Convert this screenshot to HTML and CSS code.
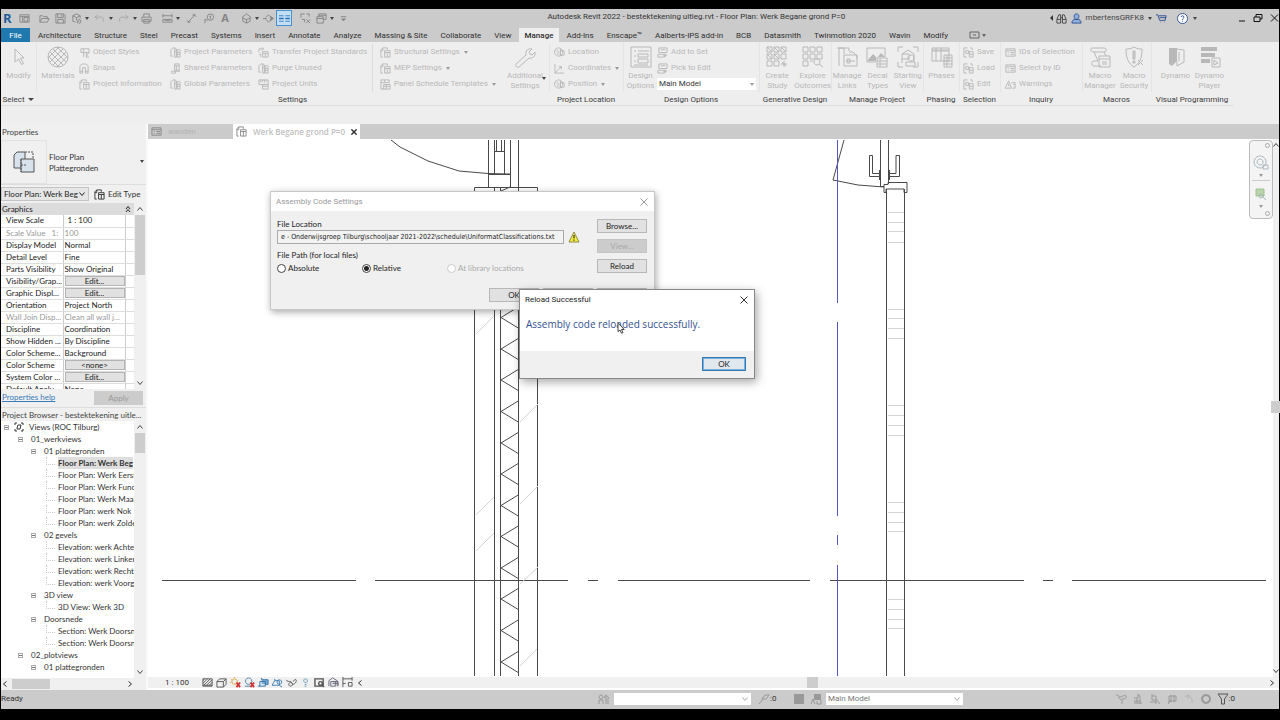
FILE: index.html
```html
<!DOCTYPE html>
<html lang="en">
<head>
<meta charset="utf-8">
<title>Autodesk Revit 2022</title>
<link rel="stylesheet" href="styles.css">
</head>
<body>
<svg class="sprite" aria-hidden="true">
  <symbol id="i-home" viewBox="0 0 12 12"><path d="M1 2h10v8H1zM1 4h10M4 4v6M5.500 5h4v4h-4z"/></symbol>
  <symbol id="i-open" viewBox="0 0 12 12"><path d="M1 10V3h3l1 1h4v2M1 10l2-4h8L9 10z"/></symbol>
  <symbol id="i-save" viewBox="0 0 12 12"><path d="M1 1h8.500l1.500 1.500V11H1zM3 1v4h6V1M3 11V7h6v4M7 2v2"/></symbol>
  <symbol id="i-sync" viewBox="0 0 12 12"><path d="M2 9V3l4-2 4 2v3M2 3l4 2 4-2M6 5v3M2 9l3 1M7 8.500a2 2 0 1 1 1 2.500M7 11V9h2"/></symbol>
  <symbol id="i-undo" viewBox="0 0 12 12"><path d="M4 2L1 4.500 4 7M1 4.500h6c3 0 4 2 3 5"/></symbol>
  <symbol id="i-redo" viewBox="0 0 12 12"><path d="M8 2l3 2.500L8 7M11 4.500H5c-3 0-4 2-3 5"/></symbol>
  <symbol id="i-print" viewBox="0 0 12 12"><path d="M3 4V1h6v3M1 4.500h10V9H1zM3 7h6v4H3z"/></symbol>
  <symbol id="i-measure" viewBox="0 0 12 12"><path d="M1 3h10M1 1v4M11 1v4M1 7h10v3H1zM3 8h6"/></symbol>
  <symbol id="i-dim" viewBox="0 0 12 12"><path d="M2 10l8-8M1 8l3 3M8 1l3 3M2 10l3-.5M10 2l-3 .5"/></symbol>
  <symbol id="i-tag" viewBox="0 0 12 12"><path d="M1 11V7l3 1M7 1a3.500 3.500 0 1 1 0 7 3.500 3.500 0 0 1 0-7zM6 4l1-1v4"/></symbol>
  <symbol id="i-cube" viewBox="0 0 12 12"><path d="M1 5l5-4 5 4M2 4.500V9l4 2 4-2V4.500M6 11V7M2 6l4 1 4-1"/></symbol>
  <symbol id="i-section" viewBox="0 0 12 12"><path d="M6 2l4 4-4 4-3-3M6 2L3 5M0 6h4"/><path class="solid" d="M8 3l4 3-4 3z"/></symbol>
  <symbol id="i-thin" viewBox="0 0 14 12"><path d="M0 2.500h6M8 2.500h6M0 9.500h6M8 9.500h6"/><path stroke-width="2" d="M0 6h6M8 6h6"/></symbol>
  <symbol id="i-close-hidden" viewBox="0 0 12 12"><path d="M1 5V1h4M7 1h3v3M2 7h3v3M7 7l4 4M11 7l-4 4"/></symbol>
  <symbol id="i-windows" viewBox="0 0 12 12"><path d="M3 4V1h8v6H8M1 4h7v7H1zM1 6h7M3 2.500h8"/></symbol>
  <symbol id="i-more" viewBox="0 0 12 12"><path d="M3 4h6"/><path class="solid" d="M3 6h6L6 9z"/></symbol>
  <symbol id="i-binoc" viewBox="0 0 12 12"><path d="M1 11V7l2-5h2v9H1zM11 11V7L9 2H7v9h4zM5 5h2M1 7h4M7 7h4"/></symbol>
  <symbol id="i-user" viewBox="0 0 12 12"><path d="M6 1c4 0 3 6 0 6S2 1 6 1zM1 11c0-3 2-4 3-4h4c1 0 3 1 3 4z"/></symbol>
  <symbol id="i-cart" viewBox="0 0 12 12"><path d="M0 2h2l2 6h6l1-5H3M4 5h7M5 10h.5M9 10h.5"/></symbol>
  <symbol id="i-help" viewBox="0 0 12 12"><path d="M6 .5a5.500 5.500 0 1 1 0 11 5.500 5.500 0 0 1 0-11zM4.500 4.500c0-2 3-2 3 0C7.500 6 6 5.500 6 7.500M6 8.500v1"/></symbol>
  <symbol id="i-down" viewBox="0 0 8 8"><path d="M1.500 2.500L4 5.500l2.500-3"/></symbol>
  <symbol id="i-up" viewBox="0 0 8 8"><path d="M1.500 5.500L4 2.500l2.500 3"/></symbol>
  <symbol id="i-up2" viewBox="0 0 8 8"><path d="M2 4l2-2.500L6 4M2 7l2-2.500L6 7"/></symbol>
  <symbol id="i-left" viewBox="0 0 8 8"><path d="M5.500 1.500L2.500 4l3 2.500"/></symbol>
  <symbol id="i-right" viewBox="0 0 8 8"><path d="M2.500 1.500L5.500 4l-3 2.500"/></symbol>
  <symbol id="i-x" viewBox="0 0 8 8"><path d="M.5.5l7 7M7.500.5l-7 7"/></symbol>
  <symbol id="i-doc" viewBox="0 0 12 12"><path d="M3 11H1V3l2-2h5v2M3 1v3H1M5 4h6v7H5zM5 6h6M8 6v5"/></symbol>
  <symbol id="i-obj" viewBox="0 0 12 12"><path d="M2 6V2h3v9M5 2h6v4H2M11 6L8 10M8 6v5h3"/></symbol>
  <symbol id="i-snap" viewBox="0 0 12 12"><path d="M1 11V4c0-4 9-4 9 0v7H7V5H4v6zM1 9h3M7 9h3"/></symbol>
  <symbol id="i-params" viewBox="0 0 12 12"><path d="M3 10H1V3l2-2h3M5 2h2v9H5zM8 3h3v8H8zM8 6h3M5 5h2M8 8h3"/></symbol>
  <symbol id="i-shared" viewBox="0 0 12 12"><path d="M5 1h5v7H5zM5 3h5M7 3v5M1 9h10M6 9v2M1 11h5"/></symbol>
  <symbol id="i-transfer" viewBox="0 0 12 12"><path d="M1 6V2h5M4 0l2 2-2 2M5 5h6v6H5zM5 7h6M8 7v4M1 8h2v3"/></symbol>
  <symbol id="i-units" viewBox="0 0 12 12"><path d="M1 1h10v5H1zM3 1v3M5 1v2M7 1v3M9 1v2M5 6h6v5H5zM5 8h6"/></symbol>
  <symbol id="i-panel" viewBox="0 0 12 12"><path d="M1 1h9v3H1zM1 4v7h4M4 6h7v5H4zM4 8h7M7 6v5M5 1v3"/></symbol>
  <symbol id="i-globe" viewBox="0 0 12 12"><path d="M5 1a4.500 4.500 0 1 0 .1 0M2 3l3 2-1 4M7 2v8M7 4h4v5H7z"/></symbol>
  <symbol id="i-coord" viewBox="0 0 12 12"><path d="M1 1v10h10M1 11l7-7M5 4h3v3"/></symbol>
  <symbol id="i-set" viewBox="0 0 12 12"><path d="M2 1h9v5H2zM4 3h5M1 8h7v3H1zM9 7v4M7 9h4"/></symbol>
  <symbol id="i-sel" viewBox="0 0 12 12"><path d="M1 11V1h4M8 1h2v2M1 11h3M3 4h3v3H3zM7 5h4v6H7zM7 8h4"/></symbol>
  <symbol id="i-ids" viewBox="0 0 12 12"><path d="M1 2h10v8H1zM1 4h10M3 6h1M6 6h4M3 8h1M6 8h4"/></symbol>
  <symbol id="i-warn" viewBox="0 0 12 12"><path d="M4 2l3 8H0zM4 5v3M7 4h4v6H8M9 6h2"/></symbol>

  <symbol id="b-arrow" viewBox="0 0 22 22"><path d="M7 3v13l3.500-3 3 5.500 2-1-3-5.500H16z"/></symbol>
  <symbol id="b-mat" viewBox="0 0 22 22"><path d="M11 1a10 10 0 1 1 0 20 10 10 0 0 1 0-20zM3 6l13 13M6 3l13 13M1.500 10l10.500 11M10 1l11 11M19 6L6 19M16 3L3 16M20.500 10L10 21M12 1L1 12"/></symbol>
  <symbol id="b-wrench" viewBox="0 0 22 22"><path d="M2 18L12 9c-1-4 2-7 6-6l-3 3 1 2 2 1 3-3c1 4-3 7-6 6L5 21c-2 1-4-1-3-3z"/></symbol>
  <symbol id="b-options" viewBox="0 0 22 22"><path d="M1 1h20v20H1zM4 5h2M8 5h11M4 10h2M8 8h10v3H8zM4 15h2M8 13h10v4H8zM4 19h14"/></symbol>
  <symbol id="b-grid" viewBox="0 0 22 22"><path d="M1 1h5v5H1zM8 1h5v5H8zM15 1h5v5h-5zM1 8h5v5H1zM8 8h5v5H8zM15 8h5v5h-5zM1 15h5v5H1zM8 15h5v5H8zM1 1l5 5M8 1l5 5M15 1l5 5M1 8l5 5M8 8l5 5M18 15v6M15 18h6M16 16l4 4"/></symbol>
  <symbol id="b-explore" viewBox="0 0 22 22"><path d="M1 1h5v5H1zM8 1h5v5H8zM15 1h5v5h-5zM1 8h5v5H1zM8 8h5v5H8zM15 8h5v5h-5zM1 15h5v5H1zM8 15h3M15 13a3 3 0 1 1-.1 0M17 18l4 3"/></symbol>
  <symbol id="b-links" viewBox="0 0 22 22"><path d="M3 20V2h5v6M1 2h12v3M13 6h4l4 4v3M8 9h13v11H8zM10 15h9M11 13v4h3v-4z"/></symbol>
  <symbol id="b-decal" viewBox="0 0 22 22"><path d="M1 2h18v9M1 2v14h9M11 12h10v9H11zM11 15h10M11 18h10M14 12v9"/><path class="solid" d="M2 14l5-6 4 4 4-5 4 4H10v4H2z"/></symbol>
  <symbol id="b-start" viewBox="0 0 22 22"><path d="M1 6V1h5M16 1h5v5M21 16v5h-5M6 21H1v-5M5 17V8l6-4 6 4v8M5 8h7v5H5M14 9a3 3 0 1 1-.1 0M9 16h9v4H9z"/></symbol>
  <symbol id="b-phases" viewBox="0 0 22 22"><path d="M1 2h17v13H1zM1 4h17M1 5h17M5 2v13M10 2v13M13 9h8v12h-8zM13 12h8M13 15h8M13 18h8M16 9v12"/></symbol>
  <symbol id="b-macro" viewBox="0 0 22 22"><path d="M3 2h12c3 0 3 4 0 4H5C1 6 1 2 3 2zM5 6l4 9H5c-3 0-3 5 0 5h7M15 6l2 4M10 10h11v11H10zM10 13h11M13 16h5M13 18h5"/></symbol>
  <symbol id="b-shield" viewBox="0 0 22 22"><path d="M11 1c3 2 6 2 8 2 0 9-2 14-8 18C5 17 3 12 3 3c2 0 5 0 8-2zM11 5v8M10 5h2v8h-2zM10 15h2v2h-2zM15 14l5 5M20 14l-5 5"/></symbol>
  <symbol id="b-dynamo" viewBox="0 0 22 22"><path class="solid" d="M4 2h8v13l-5 5-3-2z"/><path d="M12 3l7 1v12l-7 4v-5M14 6v9"/></symbol>
  <symbol id="b-player" viewBox="0 0 22 22"><path class="solid" d="M2 1h16v4H2zM2 7h14v4H2zM2 13h9v4H2z"/><path d="M13 12h8v9h-8zM15 14l4 3-4 2z"/></symbol>
  <symbol id="b-plan" viewBox="0 0 22 22"><path class="tint" d="M1 4l3-3h8v16H1z"/><path class="tint" d="M8 8h13v13H8z"/><path d="M12 1h8v7M8 8v13M8 14h5" stroke-dasharray="2 1"/></symbol>
</svg>

<div class="app">
  <header class="titlebar">
    <div class="qat">
      <span class="logo">R</span>
      <button class="q" aria-label="Home"><svg><use href="#i-home"/></svg></button>
      <button class="q wide" aria-label="Open"><svg><use href="#i-open"/></svg></button>
      <button class="q" aria-label="Save"><svg><use href="#i-save"/></svg></button>
      <button class="q" aria-label="Synchronize"><svg><use href="#i-sync"/></svg></button>
      <i class="caret"></i>
      <button class="q dim" aria-label="Undo"><svg><use href="#i-undo"/></svg></button>
      <i class="caret"></i>
      <button class="q dim" aria-label="Redo"><svg><use href="#i-redo"/></svg></button>
      <i class="caret"></i>
      <button class="q" aria-label="Print"><svg><use href="#i-print"/></svg></button>
      <i class="sep"></i>
      <button class="q" aria-label="Measure"><svg><use href="#i-measure"/></svg></button>
      <i class="caret"></i>
      <button class="q broad" aria-label="Aligned dimension"><svg><use href="#i-dim"/></svg></button>
      <button class="q" aria-label="Tag"><svg><use href="#i-tag"/></svg></button>
      <button class="q letter" aria-label="Text">A</button>
      <i class="sep"></i>
      <button class="q" aria-label="3D view"><svg><use href="#i-cube"/></svg></button>
      <i class="caret"></i>
      <button class="q" aria-label="Section"><svg><use href="#i-section"/></svg></button>
      <button class="q on" aria-label="Thin lines"><svg><use href="#i-thin"/></svg></button>
      <i class="sep"></i>
      <button class="q" aria-label="Close inactive"><svg><use href="#i-close-hidden"/></svg></button>
      <button class="q" aria-label="Switch windows"><svg><use href="#i-windows"/></svg></button>
      <i class="caret"></i>
      <button class="q" aria-label="Customize"><svg><use href="#i-more"/></svg></button>
    </div>
    <h1 class="apptitle">Autodesk Revit 2022 - bestektekening uitleg.rvt - Floor Plan: Werk Begane grond P=0</h1>
    <div class="account">
      <i class="caret leftward"></i>
      <button class="q" aria-label="Search"><svg><use href="#i-binoc"/></svg></button>
      <button class="user"><svg><use href="#i-user"/></svg>mbertensGRFK8<i class="caret"></i></button>
      <button class="q blue" aria-label="Store"><svg><use href="#i-cart"/></svg></button>
      <button class="q blue help" aria-label="Help"><svg><use href="#i-help"/></svg></button>
      <i class="caret"></i>
      <div class="wincontrols">
        <button aria-label="Minimize"><svg viewBox="0 0 10 10"><path d="M2 8h6"/></svg></button>
        <button aria-label="Restore"><svg viewBox="0 0 10 10"><path d="M3 4V1.500h6V6H7M1 4h6v4.500H1z"/></svg></button>
        <button aria-label="Close"><svg viewBox="0 0 10 10"><path d="M2 1.500l7 7M9 1.500l-7 7"/></svg></button>
      </div>
    </div>
  </header>

  <nav class="tabs">
    <button class="file">File</button>
    <button>Architecture</button><button>Structure</button><button>Steel</button><button>Precast</button><button>Systems</button><button>Insert</button><button>Annotate</button><button>Analyze</button><button>Massing &amp; Site</button><button>Collaborate</button><button>View</button><button class="active">Manage</button><button>Add-Ins</button><button>Enscape™</button><button>Aalberts-IPS add-in</button><button>BCB</button><button>Datasmith</button><button>Twinmotion 2020</button><button>Wavin</button><button>Modify</button>
    <button class="collapse" aria-label="Minimize ribbon"><svg viewBox="0 0 18 8"><path d="M1 1h9v6H1zM4 4h3"/><path class="solid" d="M13 3h4l-2 3z"/></svg></button>
  </nav>

  <div class="ribbon">
    <section class="panel p-select">
      <div class="tools"><button class="big"><svg><use href="#b-arrow"/></svg>Modify</button></div>
      <h2>Select <i class="caret"></i></h2>
    </section>
    <section class="panel p-settings">
      <div class="tools">
        <button class="big"><svg><use href="#b-mat"/></svg>Materials</button>
        <div class="col c1"><button><svg><use href="#i-obj"/></svg>Object Styles</button><button><svg><use href="#i-snap"/></svg>Snaps</button><button><svg><use href="#i-doc"/></svg>Project Information</button></div>
        <div class="col c2"><button><svg><use href="#i-params"/></svg>Project Parameters</button><button><svg><use href="#i-shared"/></svg>Shared Parameters</button><button><svg><use href="#i-params"/></svg>Global Parameters</button></div>
        <div class="col c3"><button><svg><use href="#i-transfer"/></svg>Transfer Project Standards</button><button><svg><use href="#i-params"/></svg>Purge Unused</button><button><svg><use href="#i-units"/></svg>Project Units</button></div>
        <div class="col c4"><button><svg><use href="#i-doc"/></svg>Structural Settings<i class="caret"></i></button><button><svg><use href="#i-doc"/></svg>MEP Settings<i class="caret"></i></button><button><svg><use href="#i-panel"/></svg>Panel Schedule Templates<i class="caret"></i></button></div>
        <button class="big"><svg><use href="#b-wrench"/></svg>Additional<br>Settings<i class="caret over"></i></button>
      </div>
      <h2>Settings</h2>
    </section>
    <section class="panel p-location">
      <div class="tools"><div class="col"><button><svg><use href="#i-globe"/></svg>Location</button><button><svg><use href="#i-coord"/></svg>Coordinates<i class="caret"></i></button><button><svg><use href="#i-globe"/></svg>Position<i class="caret"></i></button></div></div>
      <h2>Project Location</h2>
    </section>
    <section class="panel p-options">
      <div class="tools">
        <button class="big"><svg><use href="#b-options"/></svg>Design<br>Options</button>
        <div class="col"><button><svg><use href="#i-set"/></svg>Add to Set</button><button><svg><use href="#i-set"/></svg>Pick to Edit</button><div class="combo"><select aria-label="Design option"><option>Main Model</option></select><i class="caret"></i></div></div>
      </div>
      <h2>Design Options</h2>
    </section>
    <section class="panel p-gen">
      <div class="tools"><button class="big"><svg><use href="#b-grid"/></svg>Create<br>Study</button><button class="big"><svg><use href="#b-explore"/></svg>Explore<br>Outcomes</button></div>
      <h2>Generative Design</h2>
    </section>
    <section class="panel p-manage">
      <div class="tools"><button class="big"><svg><use href="#b-links"/></svg>Manage<br>Links</button><button class="big"><svg><use href="#b-decal"/></svg>Decal<br>Types</button><button class="big"><svg><use href="#b-start"/></svg>Starting<br>View</button></div>
      <h2>Manage Project</h2>
    </section>
    <section class="panel p-phase">
      <div class="tools"><button class="big"><svg><use href="#b-phases"/></svg>Phases</button></div>
      <h2>Phasing</h2>
    </section>
    <section class="panel p-sel">
      <div class="tools"><div class="col"><button><svg><use href="#i-sel"/></svg>Save</button><button><svg><use href="#i-sel"/></svg>Load</button><button><svg><use href="#i-sel"/></svg>Edit</button></div></div>
      <h2>Selection</h2>
    </section>
    <section class="panel p-inq">
      <div class="tools"><div class="col"><button><svg><use href="#i-ids"/></svg>IDs of Selection</button><button><svg><use href="#i-ids"/></svg>Select by ID</button><button><svg><use href="#i-warn"/></svg>Warnings</button></div></div>
      <h2>Inquiry</h2>
    </section>
    <section class="panel p-macro">
      <div class="tools"><button class="big"><svg><use href="#b-macro"/></svg>Macro<br>Manager</button><button class="big"><svg><use href="#b-shield"/></svg>Macro<br>Security</button></div>
      <h2>Macros</h2>
    </section>
    <section class="panel p-visual">
      <div class="tools"><button class="big"><svg><use href="#b-dynamo"/></svg>Dynamo</button><button class="big"><svg><use href="#b-player"/></svg>Dynamo<br>Player</button></div>
      <h2>Visual Programming</h2>
    </section>
  </div>

  <div class="workspace">
    <aside class="side">
      <h2 class="sidetitle">Properties</h2>
      <div class="typebox">
        <span class="thumb"><svg><use href="#b-plan"/></svg></span>
        <span class="typename">Floor Plan<br>Plattegronden</span>
        <i class="caret"></i>
      </div>
      <div class="instance">
        <div class="combo"><select aria-label="Instance"><option>Floor Plan: Werk Beg</option></select><svg class="chev"><use href="#i-down"/></svg></div>
        <button class="edittype"><svg><use href="#i-doc"/></svg>Edit Type</button>
      </div>
      <div class="props">
        <div class="propview">
          <table>
            <colgroup><col class="k"><col class="v"><col></colgroup>
            <thead><tr><th colspan="3"><div>Graphics<svg><use href="#i-up2"/></svg></div></th></tr></thead>
            <tbody>
              <tr><td>View Scale</td><td class="ind">1 : 100</td><td></td></tr>
              <tr class="off"><td>Scale Value &nbsp; 1:</td><td>100</td><td></td></tr>
              <tr><td>Display Model</td><td>Normal</td><td></td></tr>
              <tr><td>Detail Level</td><td>Fine</td><td></td></tr>
              <tr><td>Parts Visibility</td><td>Show Original</td><td></td></tr>
              <tr><td>Visibility/Grap...</td><td><button>Edit...</button></td><td></td></tr>
              <tr><td>Graphic Displ...</td><td><button>Edit...</button></td><td></td></tr>
              <tr><td>Orientation</td><td>Project North</td><td></td></tr>
              <tr class="off"><td>Wall Join Disp...</td><td>Clean all wall j...</td><td></td></tr>
              <tr><td>Discipline</td><td>Coordination</td><td></td></tr>
              <tr><td>Show Hidden ...</td><td>By Discipline</td><td></td></tr>
              <tr><td>Color Scheme...</td><td>Background</td><td></td></tr>
              <tr><td>Color Scheme</td><td><button>&lt;none&gt;</button></td><td></td></tr>
              <tr><td>System Color ...</td><td><button>Edit...</button></td><td></td></tr>
              <tr><td>Default Analy...</td><td>None</td><td></td></tr>
            </tbody>
          </table>
        </div>
        <div class="vscroll"><svg><use href="#i-up"/></svg><i class="thumb64"></i><svg class="end"><use href="#i-down"/></svg></div>
      </div>
      <div class="propfoot"><a href="#">Properties help</a><button disabled>Apply</button></div>
      <h2 class="sidetitle browser">Project Browser - bestektekening uitle...</h2>
      <div class="treebox">
        <ul class="tree">
          <li class="l0"><i class="pm"></i><svg viewBox="0 0 10 10"><path d="M1 3V1h2M7 1h2v2M9 7v2H7M3 9H1V7M3 6l1-3h3L6 7H3z"/></svg>Views (ROC Tilburg)</li>
          <li class="l1"><i class="pm"></i>01_werkviews</li>
          <li class="l2"><i class="pm"></i>01 plattegronden</li>
          <li class="l3"><b>Floor Plan: Werk Beg</b></li>
          <li class="l3">Floor Plan: Werk Eerst</li>
          <li class="l3">Floor Plan: Werk Func</li>
          <li class="l3">Floor Plan: Werk Maai</li>
          <li class="l3">Floor Plan: werk Nok</li>
          <li class="l3">Floor Plan: werk Zolde</li>
          <li class="l2"><i class="pm"></i>02 gevels</li>
          <li class="l3">Elevation: werk Achte</li>
          <li class="l3">Elevation: werk Linker</li>
          <li class="l3">Elevation: werk Rechte</li>
          <li class="l3">Elevation: werk Voorg</li>
          <li class="l2"><i class="pm"></i>3D view</li>
          <li class="l3">3D View: Werk 3D</li>
          <li class="l2"><i class="pm"></i>Doorsnede</li>
          <li class="l3">Section: Werk Doorsn</li>
          <li class="l3">Section: Werk Doorsn</li>
          <li class="l1"><i class="pm"></i>02_plotviews</li>
          <li class="l2"><i class="pm"></i>01 plattegronden</li>
        </ul>
        <div class="vscroll"><svg><use href="#i-up"/></svg><i class="thumb20"></i><svg class="end"><use href="#i-down"/></svg></div>
      </div>
      <div class="hscroll"><svg><use href="#i-left"/></svg><i></i><svg class="end"><use href="#i-right"/></svg></div>
    </aside>

    <main class="view">
      <div class="viewtabs">
        <button class="vt"><svg><use href="#i-ids"/></svg>wanden</button>
        <button class="vt current"><svg><use href="#i-doc"/></svg>Werk Begane grond P=0<svg class="x"><use href="#i-x"/></svg></button>
      </div>
      <div class="stage">
        <div class="canvas">
          <svg class="drawing" viewBox="148 139 1125 538" preserveAspectRatio="xMinYMin slice" role="img" aria-label="Floor plan">
            <g class="ink">
              <path d="M391 140l9 7 28 14 31 10 29 2.500 22 .5M488.500 140v47M494.500 140v34M496.500 140v11M501.500 140v11M494 151.500h10M504.500 140v34M510.500 140v47M488 174.500h22M518.500 140v47"/>
              <path d="M474.500 676V187.500h63V676M494.500 187v489M500.500 187v489M518.500 187v489M501 191l9-4"/>
              <path d="M519 306.500l-18 11 18 11M519 338l-18 11 18 11M519 369l-18 11 18 11M519 400.500l-18 11 18 11M519 432l-18 11 18 11M519 463l-18 11 18 11M519 494.500l-18 11 18 11M519 525.500l-18 11 18 11M519 557l-18 11 18 11M519 588l-18 11 18 11M519 619.500l-18 11 18 11M519 651l-18 11 18 11"/>
              <path d="M162 580.500h194M375 580.500h193M588 580.500h10M618 580.500h192M830 580.500h194M1043 580.500h10M1072 580.500h194"/>
              <path d="M844 140l-11 40 25 5 26 2M880.500 140v46M888.500 140v44M869.500 155.500h3v18h8M869.500 155.500v21h11M888 173.500h8v-18h3.500v21H888M879.500 170v10M889.500 170v10"/>
              <path d="M880 186.500h4M884 192.500v-8h4v-2h19v10h-3v-3.500h-18v3.500zM888 182.500h19M886.500 189v487M904.500 189v487"/>
            </g>
            <path class="gridline" d="M837.500 140v163M837.500 322v194M837.500 535v10M837.500 565v111"/>
            <path class="faint" d="M888 212.500h16M888 222.500h16M888 231.500h16M888 242.500h16M888 309.500h16M888 318.500h16M888 328.500h16M888 338.500h16M888 405.500h16M888 415.500h16M888 425.500h16M888 435.500h16M888 502.500h16M888 512.500h16M888 522.500h16M888 531.500h16M888 599.500h16M888 609.500h16M888 619.500h16M888 628.500h16"/>
            <path class="faint" d="M476 334l18-18M476 515l18-18M476 551l18-18M520 422l18-18M520 504l18-18M520 584l18-17M520 666l17-17"/>
          </svg>

          <div class="navbar">
            <i class="dot"></i>
            <svg viewBox="0 0 16 16"><path d="M7 1a6 6 0 1 0 .1 0M7 4a3 3 0 1 0 .1 0M10 10h5v4h-5z"/></svg>
            <i class="caret"></i><hr>
            <svg viewBox="0 0 16 16"><path class="fill" d="M3 3h8v7H3z"/><path d="M8 8a2 2 0 1 1-.1 0M10 11l3 3"/></svg>
            <i class="caret"></i>
            <i class="dot last"></i>
          </div>

          <form class="dialog settings">
            <header><h3>Assembly Code Settings</h3><button type="button" aria-label="Close"><svg><use href="#i-x"/></svg></button></header>
            <div class="dbody">
              <div class="fields">
                <label for="loc">File Location</label>
                <div class="pathrow">
                  <input id="loc" type="text" value="e - Onderwijsgroep Tilburg\schooljaar 2021-2022\schedule\UniformatClassifications.txt">
                  <svg viewBox="0 0 12 12"><path d="M6 1l5 10H1z" fill="#f6ef3c" stroke="#8c8a4a"/><path d="M6 4v3.500M6 8.500v1.200" stroke="#333" stroke-width="1.200"/></svg>
                </div>
                <span>File Path (for local files)</span>
                <div class="radios">
                  <label><input type="radio" name="p">Absolute</label>
                  <label><input type="radio" name="p" checked>Relative</label>
                  <label class="off"><input type="radio" name="p" disabled>At library locations</label>
                </div>
              </div>
              <div class="actions"><button type="button">Browse...</button><button type="button" disabled>View...</button><button type="button">Reload</button></div>
            </div>
            <footer><button type="button">OK</button><button type="button" aria-label="Cancel"></button><button type="button" aria-label="Help"></button></footer>
          </form>

          <div class="dialog notice" role="alertdialog" aria-labelledby="nt">
            <header><h3 id="nt">Reload Successful</h3><button aria-label="Close"><svg><use href="#i-x"/></svg></button></header>
            <p>Assembly code reloaded successfully.</p>
            <footer><button>OK</button></footer>
            <svg class="cursor" viewBox="0 0 8 12"><path d="M1 .7v9l2-1.700 1.500 3.300 1.500-.7L4.500 7.500h2.700z"/></svg>
          </div>
        </div>
        <div class="vscroll main"><svg><use href="#i-up"/></svg><i class="thumb12"></i><svg class="end"><use href="#i-down"/></svg></div>
      </div>
      <div class="viewbar">
        <span>1 : 100</span>
        <div class="vicons">
          <svg viewBox="0 0 12 12"><path d="M1 2h10v8H1zM1 4l2-2M1 7l5-5M2 9l7-7M5 9l6-6M8 9l3-3M1 9h10"/></svg>
          <svg viewBox="0 0 12 12"><path d="M1 5h7v6H1zM1 5l3-3h7L8 5M11 2v6l-3 3"/></svg>
          <svg viewBox="0 0 12 12"><path stroke="#d8a12c" d="M5 2a3 3 0 1 0 .1 0M5 0v1M1 2l1 1M0 6h1"/><path class="red" d="M7 6l4 5M11 6l-4 5"/></svg>
          <svg viewBox="0 0 12 12"><path stroke="#4a82a8" d="M5 1a3.500 3.500 0 1 0 .1 0M1 10h6"/><path class="red" d="M7 6l4 5M11 6l-4 5"/></svg>
          <svg viewBox="0 0 12 12"><path fill="#7fb0d6" stroke="none" d="M4 3h7v5H4z"/><path stroke="#2a6da4" d="M2 5h6v5H2zM4 3h7v5H8M0 10h2M4 1v2"/></svg>
          <svg viewBox="0 0 12 12"><path stroke="#3b7cb0" d="M0 9l3-5h5v5H0M3 4V2M8 3a2.500 2.500 0 1 0 .1 0M8 9l3 2"/></svg>
          <svg viewBox="0 0 12 12"><path d="M0 3c3 4 5 0 6 3s4 2 5-1-2-3-3 0M5 6a2 2 0 1 0 .1 0"/></svg>
          <svg viewBox="0 0 12 12"><path stroke="#5a94b0" d="M6 2a2 2 0 1 0 .1 0M5 8h2M5 10h2"/></svg>
          <svg viewBox="0 0 12 12"><path stroke-width="1.500" d="M1 2h9v8H1zM7 5a2 2 0 1 0 .1 0M8 8l3 3"/></svg>
          <svg viewBox="0 0 12 12"><path stroke="#667" d="M1 10V4l4-3 5 3v6M3 5h5v5H3zM5 5h6v5M5 7h6"/></svg>
          <svg viewBox="0 0 12 12"><path d="M1 2h10M1 0v11M11 0v4M7 6h4v4H7zM1 7h3"/></svg>
        </div>
        <svg class="arr"><use href="#i-left"/></svg>
        <div class="hbar"><i></i></div>
        <svg class="arr"><use href="#i-right"/></svg>
      </div>
    </main>
  </div>

  <footer class="status">
    <span class="ready">Ready</span>
    <svg class="sico" viewBox="0 0 12 12"><path d="M3 2a2 2 0 1 0 .1 0M1 11V7h4v4M8 3v8M6 5l2-3 3 3M10 5v6"/></svg>
    <div class="combo ws"><select aria-label="Workset"><option></option></select><svg class="chev"><use href="#i-down"/></svg></div>
    <span class="press"><svg class="sico" viewBox="0 0 12 12"><path d="M1 11l4-5M4 6l3-4h4L8 6z"/></svg>:0</span>
    <svg class="sico" viewBox="0 0 12 12"><path class="solid" d="M1 1h10v10H1z"/></svg>
    <svg class="sico" viewBox="0 0 12 12"><path class="solid" d="M4 1h7v6H4z"/><path d="M1 11l2-5 2 5M7 8v3h4V7"/></svg>
    <div class="combo mm"><select aria-label="Active option"><option>Main Model</option></select><svg class="chev"><use href="#i-down"/></svg></div>
    <div class="filters">
      <svg class="sico" viewBox="0 0 12 12"><path d="M1 2c3-1 3 3 5 2s3-2 5-1-2 4-4 3v5M3 4l3 3"/></svg>
      <svg class="sico" viewBox="0 0 12 12"><path d="M2 5h4V1l2 2v8M2 8h6M2 10h8M5 5v5"/></svg>
      <svg class="sico" viewBox="0 0 12 12"><path d="M3 1v6h4V3H3M1 9h6M7 6l4 5M7 11V7"/></svg>
      <svg class="sico" viewBox="0 0 12 12"><path d="M3 10V3h7v5H3M5 2v7M8 2v7M2 11l3-4"/></svg>
      <svg class="sico pale" viewBox="0 0 12 12"><path d="M2 4l3-2 4 4M9 6v4M5 2v4"/></svg>
      <svg class="sico" viewBox="0 0 12 12"><path stroke-width="2" d="M6 2a4 4 0 1 0 .1 0"/></svg>
      <span><svg class="sico funnel" viewBox="0 0 12 12"><path d="M1 1h10L7.500 6v5h-3V6z"/></svg>:0</span>
    </div>
  </footer>
</div>
</body>
</html>
```

FILE: styles.css
```css
* { box-sizing: border-box; }
html, body { height: 100%; }
body {
  margin: 0;
  background: #000;
  color: #333;
  font: 8px/12px Roboto, "Open Sans", sans-serif;
}
button, input, select { font: inherit; color: inherit; margin: 0; padding: 0; border: 0; background: none; border-radius: 0; }
button { white-space: nowrap; }
h1, h2, h3, p, ul { margin: 0; padding: 0; font-size: inherit; font-weight: 400; list-style: none; }
svg { fill: none; stroke: currentColor; stroke-width: 1; flex: none; display: block; width: 8px; height: 8px; }
.solid { fill: currentColor; stroke: none; }
.tint { fill: #d8e2ec; }
.sprite { position: absolute; width: 0; height: 0; }

.app {
  display: flex;
  flex-direction: column;
  min-height: 100vh;
  border: 1px solid #000;
  border-width: 9px 1px 11px;
  background: #cbcbcb;
}
.caret { flex: none; width: 0; height: 0; border: 2px solid transparent; border-top: 3px solid #444; border-bottom: 0; }
.caret.leftward { border: 3px solid transparent; border-right: 3px solid #333; border-left: 0; }
.sep { width: 5px; }

/* title bar */
.titlebar { display: grid; grid-template-columns: auto 1fr auto; align-items: center; height: 19px; }
.qat, .account { display: flex; align-items: center; height: 18px; color: #858585; padding-bottom: 1px; }
.qat .caret { margin: 0 1px; }
.logo { width: 15px; padding-left: 2px; font: 700 13px/16px "Open Sans", sans-serif; color: #1f5f99; }
.q { display: grid; place-items: center; width: 16px; height: 16px; }
.q svg { width: 11px; height: 11px; }
.q.wide { width: 20px; padding-left: 4px; }
.q.broad { width: 20px; }
.q.dim { color: #a8a8a8; width: 18px; }
.q.letter { font: 700 11px/16px "Open Sans", sans-serif; }
.q.on { background: #c3def4; border: 1px solid #4593d2; color: #2b74b6; }
.q.blue, .user svg { color: #2e4f93; }
.apptitle { text-align: center; white-space: nowrap; line-height: 14px; padding: 0 8px 3px 0; }
.account { gap: 1px; color: #444; }
.user { display: flex; align-items: center; gap: 4px; }
.user svg { width: 11px; height: 11px; fill: #8fb0dc; }
.account .blue { width: 17px; }
.account .help { width: 21px; padding-left: 2px; }
.account .help svg { fill: #fff; }
.wincontrols { display: flex; gap: 6px; padding-left: 39px; color: #111; }
.wincontrols svg { width: 10px; height: 10px; }

/* ribbon tabs */
.tabs { display: flex; height: 14px; gap: 1px; color: #2f2f2f; }
.tabs button { padding: 0 6px; line-height: 15px; }
.tabs .file { width: 29px; margin-right: 1px; background: #1f78ae; color: #fff; }
.tabs .active { background: #eee; font-weight: 500; }
.tabs .collapse { padding-left: 14px; color: #666; }
.tabs .collapse svg { width: 18px; height: 8px; }

/* ribbon */
.ribbon { display: flex; background: #eee; height: 82px; color: #b8b8b8; }
.panel { flex: none; display: flex; flex-direction: column; height: 64px; border-bottom: 1px solid #dcdcdc; }
.panel + .panel .tools { border-left: 1px solid #e4e4e4; }
.panel h2 { color: #3c3c3c; text-align: center; white-space: nowrap; line-height: 15px; }
.panel h2 .caret { display: inline-block; margin: 0 0 1px 2px; border-width: 3px 3px 0; }
.tools { flex: none; display: flex; height: 50px; padding-top: 2px; }
.big { position: relative; display: flex; flex-direction: column; align-items: center; flex: 1; line-height: 10px; text-align: center; }
.big svg { width: 22px; height: 22px; margin: 2px 0 3px; }
.over { position: absolute; right: 0; bottom: 12px; }
.col { display: flex; flex-direction: column; flex: none; }
.col > button { display: flex; align-items: center; gap: 3px; height: 16px; }
.col svg { width: 11px; height: 11px; }
.col .caret { border-top-color: #999; margin-left: 1px; }
.combo { position: relative; display: flex; align-items: center; background: #fff; color: #333; }
.combo select { appearance: none; width: 100%; padding: 0 2px; }
.combo .caret, .chev { position: absolute; right: 2px; }
.p-select { width: 35px; }
.p-settings { width: 513px; }
.p-settings .big { flex: none; width: 42px; }
.c1 { width: 91px; }
.c2 { width: 88px; }
.c3 { width: 114px; }
.c4 { width: 132px; padding-left: 7px; border-left: 1px solid #dcdcdc; }
.p-location { width: 74px; }
.p-location .tools { padding-left: 4px; }
.p-options { width: 136px; }
.p-options .col { width: 102px; padding-right: 3px; }
.p-options .combo { height: 12px; margin-top: 2px; }
.p-gen { width: 72px; }
.p-manage { width: 92px; }
.p-phase { width: 36px; }
.p-sel { width: 41px; }
.p-sel .tools { padding-left: 3px; }
.p-inq { width: 82px; }
.p-inq .tools { padding-left: 4px; }
.p-macro { width: 69px; }
.p-visual { width: 82px; }
.p-visual .big { flex: none; width: 34px; }
.p-visual .tools { justify-content: center; }

/* workspace */
.workspace { flex: 1; display: flex; min-height: 0; }
.side { display: flex; flex-direction: column; flex: none; width: 147px; background: #f0f0f0; border-right: 2px solid #fafafa; white-space: nowrap; font-family: Lato, Roboto, sans-serif; }
.sidetitle { height: 15px; line-height: 16px; padding-left: 1px; color: #444; }
.typebox { display: flex; align-items: center; height: 46px; padding-right: 2px; border-bottom: 1px solid #ddd; }
.typebox .thumb { display: grid; place-items: center; width: 46px; height: 44px; border: 1px solid #e2e2e2; color: #555; }
.typebox svg { width: 22px; height: 22px; }
.typename { flex: 1; padding: 2px 0 0 2px; line-height: 11px; }
.instance { display: flex; align-items: center; height: 18px; }
.instance .combo { width: 88px; height: 14px; background: #e6e6e6; border: 1px solid #c4c4c4; color: #222; }
.edittype { display: flex; align-items: center; gap: 3px; padding-left: 5px; }
.edittype svg { width: 11px; height: 11px; }
.props { display: flex; flex: none; height: 186px; background: #fff; color: #222; }
.propview { flex: 1; overflow: hidden; }
.propview table { width: 100%; table-layout: fixed; border-collapse: collapse; }
.propview .k { width: 62px; }
.propview .v { width: 62px; }
.propview tr { height: 12px; }
.propview th { height: 12px; padding: 0 0 0 1px; text-align: left; font-weight: 400; line-height: 11px; background: #dcdcdc; }
.propview th div { display: flex; justify-content: space-between; align-items: center; padding-right: 2px; }
.propview td { padding: 0 0 0 5px; border-bottom: 1px solid #ddd; line-height: 11px; height: 12px; }
.propview td + td { border-left: 1px solid #ccc; padding: 0 0 0 1px; }
.propview td.ind { padding-left: 4px; }
.propview td button { display: block; width: 100%; height: 10px; line-height: 8px; background: #e1e1e1; border: 1px solid #b4b4b4; }
.propview .off { color: #999; }
.vscroll { flex: none; display: flex; flex-direction: column; align-items: center; width: 12px; background: #f0f0f0; color: #444; }
.vscroll svg { margin: 2px 0; }
.vscroll .end { margin-top: auto; }
.vscroll i { width: 10px; background: #cdcdcd; }
.thumb64 { height: 60px; }
.thumb20 { height: 20px; }
.propfoot { display: flex; justify-content: space-between; height: 17px; padding: 2px 3px 1px 1px; line-height: 12px; }
.propfoot a { color: #3a7cb8; }
.propfoot button { width: 49px; background: #ccc; color: #999; }
.browser { margin-top: 1px; height: 14px; line-height: 14px; border-top: 1px solid #ddd; }
.treebox { flex: 1; display: flex; min-height: 0; background: #fff; }
.tree { flex: 1; overflow: hidden; }
.tree li { display: flex; align-items: center; height: 12px; }
.tree li svg { width: 10px; height: 10px; margin-right: 5px; }
.l0 { padding-left: 3px; }
.l1 { padding-left: 17px; }
.l2 { padding-left: 30px; }
.l3 { padding-left: 45px; }
.l3::before { content: ""; flex: none; align-self: stretch; width: 8px; height: 7px; border: dotted #ccc; border-width: 0 0 1px 1px; margin-right: 3px; }
.l3 b { background: #dedede; }
.pm { flex: none; width: 5px; height: 5px; margin-right: 8px; border: 1px solid #aaa; background: linear-gradient(#777, #777) center / 3px 1px no-repeat; }
.l0 .pm { margin-right: 5px; }
.hscroll { display: flex; align-items: center; height: 12px; color: #333; }
.hscroll i { width: 38px; height: 10px; margin-left: 3px; background: #cdcdcd; }
.hscroll .end { margin-left: auto; margin-right: 12px; }

/* drawing view */
.view { flex: 1; min-width: 0; display: flex; flex-direction: column; background: #fff; }
.viewtabs { display: flex; height: 15px; background: #cbcbcb; }
.vt { display: flex; align-items: center; gap: 6px; width: 85px; padding-left: 3px; color: #b4b4b4; }
.vt svg { width: 11px; height: 11px; color: #888; }
.vt.current { width: 127px; gap: 4px; background: #fff; color: #c0c0c0; font: 600 8px/12px "Open Sans", sans-serif; justify-content: space-between; padding-right: 3px; }
.vt .x { width: 6px; height: 6px; color: #333; stroke-width: 2; }
.stage { flex: 1; display: flex; min-height: 0; }
.canvas { position: relative; flex: 1; overflow: hidden; }
.drawing { position: absolute; top: 0; width: 100%; height: 100%; }
.ink { stroke: #4a4a4a; }
.gridline { stroke: #5555c4; }
.faint { stroke: #d4d4d4; }
.vscroll.main { width: 6px; }
.thumb12 { height: 12px; margin-top: 250px; }
.navbar { position: absolute; top: 1px; right: 0; display: flex; flex-direction: column; align-items: center; width: 24px; height: 79px; padding: 2px; border: 1px solid #bbb; border-radius: 4px; background: #f4f4f4; color: #a9b6be; }
.navbar svg { width: 16px; height: 16px; margin: 7px 0 3px; }
.navbar hr { width: 100%; margin: 3px 0 -2px; border: 0; border-top: 1px solid #ccc; }
.navbar .caret { border-top-color: #999; }
.navbar .fill { fill: #b9d4ab; stroke: #a1c191; }
.dot { flex: none; width: 5px; height: 5px; border: 1px solid #aaa; border-radius: 50%; align-self: flex-end; }
.dot.last { margin-top: auto; }

/* dialogs */
.dialog { position: absolute; display: flex; flex-direction: column; background: #f0f0f0; color: #222; font-family: Lato, Roboto, sans-serif; }
.dialog header { display: flex; justify-content: space-between; align-items: center; background: #fff; height: 19px; padding: 0 6px 0 5px; }
.dialog header h3 { font-family: Roboto, sans-serif; }
.dialog button { line-height: 11px; }
.settings { left: 122px; top: 52px; width: 385px; height: 119px; border: 1px solid #c8c8c8; box-shadow: 1px 2px 7px rgba(0, 0, 0, .35); }
.settings header { color: #999; }
.dbody { display: flex; justify-content: space-between; padding: 8px 7px 0 6px; }
.fields { display: flex; flex-direction: column; line-height: 10px; }
.pathrow { display: flex; align-items: center; gap: 4px; margin: 1px 0 6px; }
.pathrow input { width: 287px; height: 14px; padding: 0 3px; border: 1px solid #aaa; background: #f3f3f3; font: 7px/12px "DejaVu Sans Condensed", "DejaVu Sans", sans-serif; }
.pathrow svg { width: 12px; height: 12px; }
.radios { display: flex; margin-top: 3px; }
.radios label { display: flex; align-items: center; gap: 2px; width: 85px; white-space: nowrap; }
.radios input { appearance: none; width: 9px; height: 9px; border: 1px solid #444; border-radius: 50%; background: #fff; }
.radios input:checked { background: radial-gradient(circle, #222 0 2px, #fff 3px); }
.radios .off { color: #aaa; }
.radios .off input { border-color: #ccc; }
.actions { display: flex; flex-direction: column; gap: 6px; }
.actions button, .settings footer button { width: 50px; height: 14px; background: #e1e1e1; border: 1px solid #b8b8b8; }
.actions button:disabled { background: #ccc; color: #aaa; border-color: #c4c4c4; }
.settings footer { display: flex; justify-content: flex-end; gap: 4px; margin-top: auto; padding: 0 7px 7px; }
.notice { left: 371px; top: 150px; width: 236px; height: 90px; border: 1px solid #888; background: #fff; box-shadow: 2px 3px 9px rgba(0, 0, 0, .35); }
.notice p { flex: 1; padding: 7px 7px 0 6px; font: 10px/16px "Open Sans", sans-serif; color: #34508f; }
.notice header svg { color: #333; }
.notice footer { display: flex; justify-content: flex-end; background: #f0f0f0; height: 27px; padding: 6px 8px; }
.notice footer button { width: 44px; height: 14px; background: #e1e8ee; border: 1px solid #2f7ab8; box-shadow: inset 0 0 0 1px #7db0d8; }
.cursor { position: absolute; left: 97px; top: 32px; width: 8px; height: 12px; fill: #fff; stroke: #444; }

/* view control bar */
.viewbar { display: flex; align-items: center; height: 13px; background: #f0f0f0; border-bottom: 2px solid #fff; color: #333; }
.viewbar > span { width: 54px; padding-left: 17px; }
.vicons { display: flex; gap: 3px; color: #555; }
.vicons svg { width: 11px; height: 11px; }
.vicons .red { stroke: #c33; stroke-width: 2; }
.arr { margin: 0 3px; }
.hbar { flex: 1; height: 11px; }
.hbar i { display: block; width: 11px; height: 11px; margin-left: 49%; background: #cdcdcd; }

/* status bar */
.status { display: flex; align-items: center; height: 19px; color: #333; padding-bottom: 2px; }
.ready { width: 597px; }
.sico { width: 12px; height: 12px; color: #999; }
.sico.pale { color: #b4b4b4; }
.sico.funnel { color: #555; }
.status .combo { height: 12px; width: 137px; margin-left: 4px; color: #777; }
.status .combo svg { color: #aaa; }
.press { display: flex; width: 36px; margin: 0 3px; padding-left: 4px; }
.status .press + .sico { margin-right: 5px; }
.filters { display: flex; gap: 5px; margin-left: auto; margin-right: 44px; }
.filters span { display: flex; }
```
